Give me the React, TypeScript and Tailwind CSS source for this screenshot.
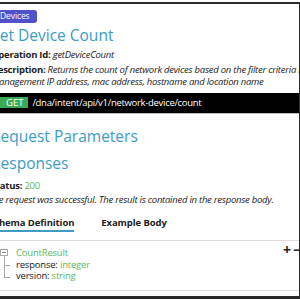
export default function App() {
  return (
    <div className="w-[300px] h-[300px] overflow-hidden bg-white font-['Open_Sans','Noto_Sans',sans-serif] text-[#222]">
      <div className="mt-[2px] h-[297px] border-t-2 border-r border-b-[3px] border-[#2a2a2a] overflow-hidden">
        <div className="ml-[-9px]">
          <div className="mt-[6px] flex">
            <span className="inline-flex h-[13px] items-center rounded-[3px] bg-[#4e51c9] pl-[9px] pr-[7px] text-[8.5px] leading-none tracking-[-0.1px] text-white">Devices</span>
          </div>
          <div className="ml-[-2.5px] mt-[3px] whitespace-nowrap text-[15.5px] leading-[19px] text-[#3c9cc4]">Get Device Count</div>
          <div className="mt-[4px] whitespace-nowrap text-[9.5px] leading-[12.5px] tracking-[-0.25px]">
            <span className="font-bold">Operation Id:</span> <span className="italic">getDeviceCount</span>
          </div>
          <div className="mt-[2px] whitespace-nowrap text-[9.5px] leading-[12.4px] tracking-[-0.25px]">
            <div>
              <span className="font-bold">Description:</span>{" "}
              <span className="italic">Returns the count of network devices based on the filter criteria i</span>
            </div>
            <div className="italic">management IP address, mac address, hostname and location name</div>
          </div>
          <div className="mt-[4.5px] flex h-[21px] items-center border-b border-[#bbb] bg-black">
            <span className="inline-flex h-[11px] items-center bg-[#3aaa55] pl-[15px] pr-[5px] text-[9.5px] leading-none text-white">GET</span>
            <span className="ml-[4px] whitespace-nowrap text-[9.5px] leading-none tracking-[-0.3px] text-white">/dna/intent/api/v1/network-device/count</span>
          </div>
          <div className="mt-[12.5px] whitespace-nowrap text-[15.5px] leading-[20px] text-[#3c9cc4]">Request Parameters</div>
          <div className="mt-[7px] whitespace-nowrap text-[15.5px] leading-[20px] text-[#3c9cc4]">Responses</div>
          <div className="mt-[7px] whitespace-nowrap text-[9.5px] leading-[12.5px] tracking-[-0.25px]">
            <span className="font-bold">Status:</span> <span className="text-[#5cb85c]">200</span>
          </div>
          <div className="ml-[-2px] mt-[1.5px] whitespace-nowrap text-[9.5px] leading-[12.5px] italic tracking-[-0.25px]">The request was successful. The result is contained in the response body.</div>
          <div className="ml-[-2px] mt-[10px] flex items-end gap-[27px] whitespace-nowrap text-[9.5px] font-bold leading-[12.5px] tracking-[-0.1px]">
            <span className="border-b-2 border-[#3c9cc4] pb-[0.5px]">Schema Definition</span>
            <span className="pb-[2.5px]">Example Body</span>
          </div>
          <div className="mt-[8.3px] flex h-[51px] border-y border-[#ddd]">
            <div className="relative ml-[9px] w-[10px] shrink-0">
              <div className="absolute left-0 top-[8px] flex h-[7px] w-[8px] items-center justify-center border border-[#aaa]">
                <div className="h-px w-[4px] bg-[#888]" />
              </div>
              <div className="absolute left-[4px] top-[15px] h-[22px] w-px bg-[#aaa]" />
              <div className="absolute left-[4px] top-[24px] h-px w-[6px] bg-[#aaa]" />
              <div className="absolute left-[4px] top-[36px] h-px w-[6px] bg-[#aaa]" />
            </div>
            <div className="ml-[6px] mt-[5.8px] whitespace-nowrap text-[9.5px] leading-[11.75px] tracking-[-0.2px]">
              <div className="text-[#5cb85c]">CountResult</div>
              <div>response: <span className="text-[#5cb85c]">integer</span></div>
              <div>version: <span className="text-[#5cb85c]">string</span></div>
            </div>
            <div className="ml-auto mr-[-2px] mt-[2px] flex gap-[2px] text-[14px] font-bold leading-[14px]">
              <span>+</span>
              <span>−</span>
            </div>
          </div>
        </div>
      </div>
    </div>
  );
}
